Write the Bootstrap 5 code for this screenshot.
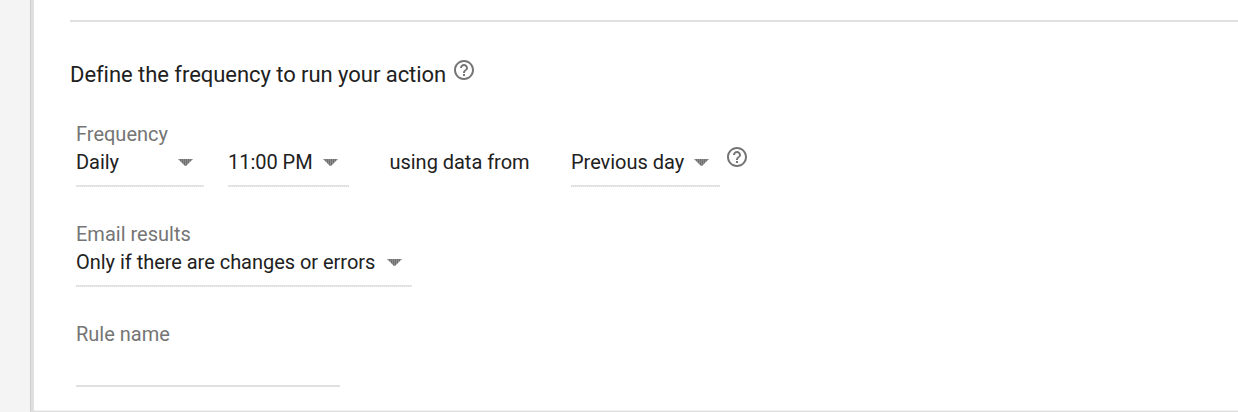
<!DOCTYPE html>
<html lang="en">
<head>
<meta charset="utf-8">
<title>Rule frequency</title>
<link rel="stylesheet" href="https://cdn.jsdelivr.net/npm/bootstrap@5.3.0/dist/css/bootstrap.min.css">
<style>
body{height:412px;background:#f4f4f4;font-family:Roboto,sans-serif;color:#212121;font-size:20px;line-height:28px}
.edge{width:4px;background:repeating-linear-gradient(#c6c6c6 0 1px,#d8d8d8 1px 2px) 0 0/1px 100% no-repeat #e0e0e0}
.gutter{width:30px}
.panel{background:#fff;border-bottom:1px solid #dedede;box-shadow:inset 0 -1px #f2f2f2;padding:20px 0 0 36px}
.divider{height:2px;background:#e0e0e0}
.heading{font-size:22px;font-weight:400;line-height:30px;margin:38px 0 0;letter-spacing:-.045px}
.help{width:24px;height:24px;fill:#757575}
.fields{padding-left:6px}
.caption{color:#757575;letter-spacing:0}
.picker{height:39px;border:0;background:linear-gradient(#e2e2e2,#e2e2e2) 0 37px/100% 1px no-repeat,repeating-linear-gradient(90deg,#dadada 0 1px,#f0f0f0 1px 2px) 0 38px/100% 1px no-repeat;padding:0;color:inherit;line-height:28px;letter-spacing:-.03px}
.caret{width:15px;height:7px;margin:11px 11px 0 0}
.w-time{width:121px;margin-left:24px}
.w-freq{width:128px}
.w-day{width:149px}
.between{width:141px;margin:0 40.500px;letter-spacing:-.03px}
.w-mail{width:336px}
.w-mail .caret{margin-right:10px}
.rule-input{width:264px;height:39px;border:0;border-bottom:2px solid #e0e0e0;padding:0;outline:0}
</style>
<script src="https://cdn.jsdelivr.net/npm/bootstrap@5.3.0/dist/js/bootstrap.bundle.min.js"></script>
</head>
<body class="d-flex overflow-hidden">
<svg class="position-absolute" width="0" height="0"><defs><pattern id="hatch" width="2" height="2" patternUnits="userSpaceOnUse"><path fill="#8c8c8c" d="M0 0h2v2H0z"/><path fill="#707070" d="M0 0h1v2H0z"/></pattern></defs><symbol id="help" viewBox="0 0 24 24"><path d="M11 18h2v-2h-2v2zm1-16C6.48 2 2 6.48 2 12s4.480 10 10 10 10-4.480 10-10S17.520 2 12 2zm0 18c-4.410 0-8-3.590-8-8s3.590-8 8-8 8 3.590 8 8-3.590 8-8 8zm0-14c-2.210 0-4 1.790-4 4h2c0-1.100.9-2 2-2s2 .9 2 2c0 2-3 1.750-3 5h2c0-2.250 3-2.500 3-5 0-2.210-1.790-4-4-4z"/></symbol>
<symbol id="caret" viewBox="0 0 15 7"><path fill="url(#hatch)" d="M0 0h15L7.500 7.500z"/></symbol></svg>
<div class="gutter flex-shrink-0"></div>
<div class="edge flex-shrink-0"></div>
<main class="panel flex-grow-1">
  <div class="divider"></div>
  <div class="d-flex align-items-start">
    <h1 class="heading text-nowrap">Define the frequency to run your action</h1>
    <svg class="help" style="margin:36px 0 0 6px"><use href="#help"/></svg>
  </div>
  <div class="fields">
    <div class="caption" style="margin-top:30px">Frequency</div>
    <div class="d-flex text-nowrap">
      <button class="picker w-freq d-flex justify-content-between"><span>Daily</span><svg class="caret"><use href="#caret"/></svg></button>
      <button class="picker w-time d-flex justify-content-between"><span>11:00 PM</span><svg class="caret"><use href="#caret"/></svg></button>
      <span class="between">using data from</span>
      <button class="picker w-day d-flex justify-content-between"><span>Previous day</span><svg class="caret"><use href="#caret"/></svg></button>
      <svg class="help" style="margin:-3px 0 0 5px"><use href="#help"/></svg>
    </div>
    <div class="caption" style="margin-top:33px">Email results</div>
    <button class="picker w-mail d-flex justify-content-between text-nowrap"><span>Only if there are changes or errors</span><svg class="caret"><use href="#caret"/></svg></button>
    <label class="caption d-block" for="rule" style="margin-top:33px">Rule name</label>
    <input class="rule-input d-block" id="rule">
  </div>
</main>
</body>
</html>
